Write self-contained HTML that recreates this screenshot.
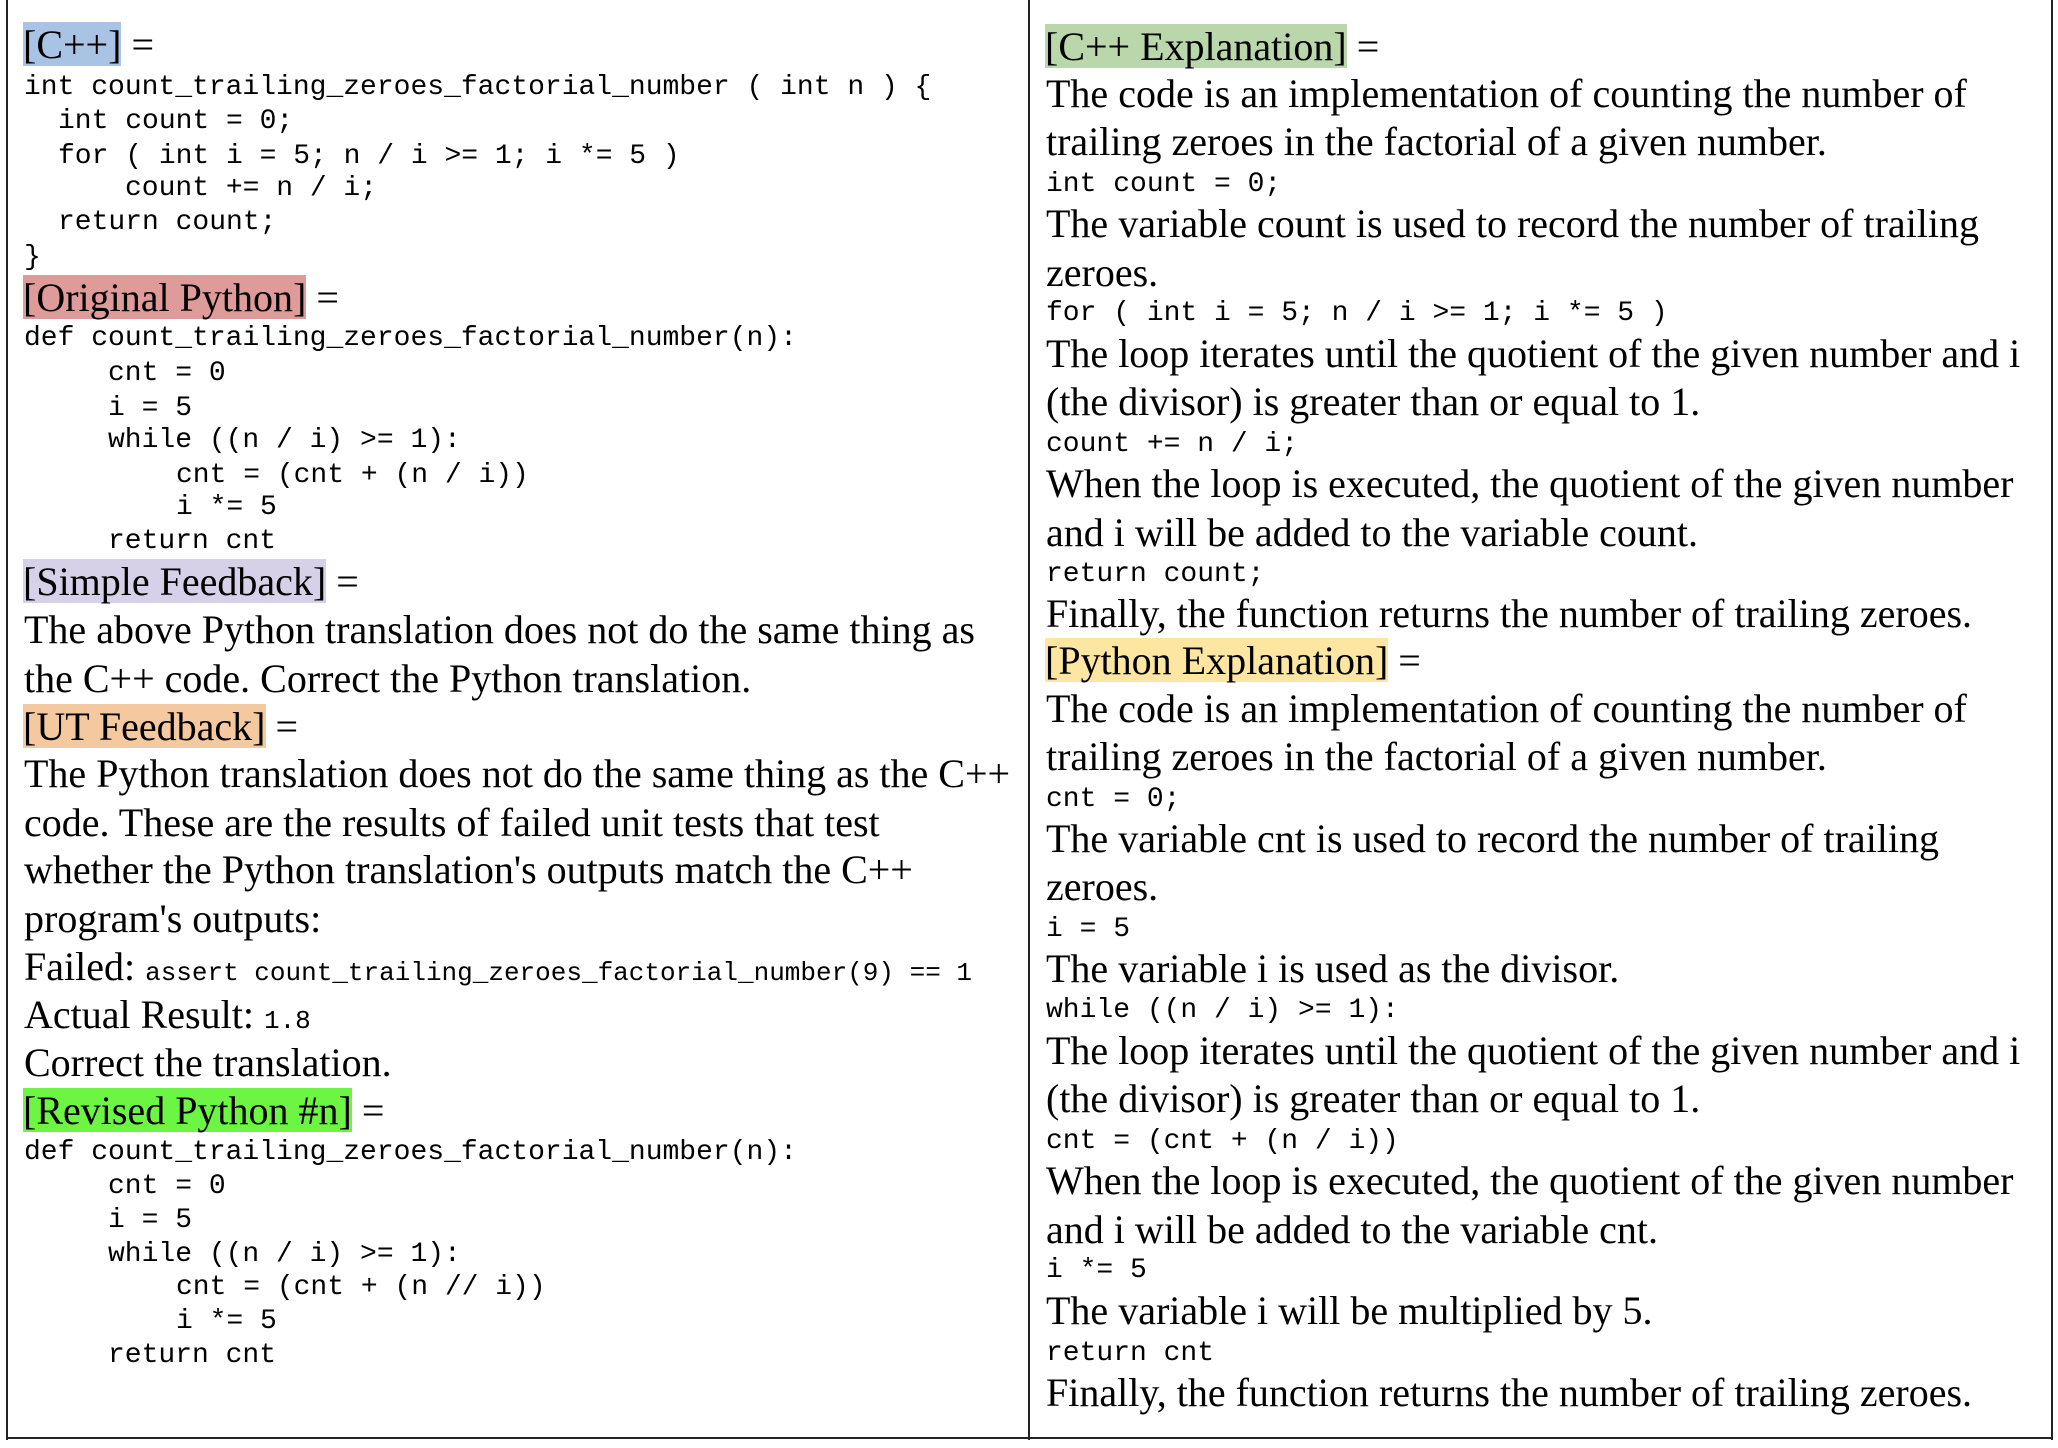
<!DOCTYPE html>
<html><head><meta charset="utf-8"><style>
body{margin:0;width:2058px;height:1448px;background:#fff;position:relative;overflow:hidden}
.l{position:absolute;white-space:pre;color:#000}
.s{font-family:"Liberation Serif",serif;font-size:40px;height:48px;line-height:48px}
.m{font-family:"Liberation Mono",monospace;font-size:28px;height:34px;line-height:34px;margin-top:3px}
.s .m{position:static;font-size:26px;margin-top:0}
.b{display:inline-block;height:44px;line-height:46px}
.v{position:absolute;background:#222}
</style></head><body>
<div class="v" style="left:6px;top:0;width:2px;height:1440px"></div>
<div class="v" style="left:1028px;top:0;width:2px;height:1440px"></div>
<div class="v" style="left:2051px;top:0;width:2px;height:1440px"></div>
<div class="v" style="left:6px;top:1437px;width:2047px;height:2px"></div>

<div class="l s" style="left:23px;top:22px;line-height:44px"><span class="b" style="background:#a8c3e4">[C++]</span> =</div>
<div class="l m" style="left:24px;top:68px">int count_trailing_zeroes_factorial_number ( int n ) {</div>
<div class="l m" style="left:58px;top:102px">int count = 0;</div>
<div class="l m" style="left:58px;top:137px">for ( int i = 5; n / i &gt;= 1; i *= 5 )</div>
<div class="l m" style="left:125px;top:169px">count += n / i;</div>
<div class="l m" style="left:58px;top:203px">return count;</div>
<div class="l m" style="left:24px;top:238px">}</div>
<div class="l s" style="left:23px;top:275px;line-height:44px"><span class="b" style="background:#df9b99">[Original Python]</span> =</div>
<div class="l m" style="left:24px;top:319px">def count_trailing_zeroes_factorial_number(n):</div>
<div class="l m" style="left:108px;top:354px">cnt = 0</div>
<div class="l m" style="left:108px;top:389px">i = 5</div>
<div class="l m" style="left:108px;top:421px">while ((n / i) &gt;= 1):</div>
<div class="l m" style="left:176px;top:456px">cnt = (cnt + (n / i))</div>
<div class="l m" style="left:176px;top:488px">i *= 5</div>
<div class="l m" style="left:108px;top:522px">return cnt</div>
<div class="l s" style="left:23px;top:559px;line-height:44px"><span class="b" style="background:#d6d0e8">[Simple Feedback]</span> =</div>
<div class="l s" style="left:24px;top:606px">The above Python translation does not do the same thing as</div>
<div class="l s" style="left:24px;top:655px">the C++ code. Correct the Python translation.</div>
<div class="l s" style="left:23px;top:704px;line-height:44px"><span class="b" style="background:#f4c9a0">[UT Feedback]</span> =</div>
<div class="l s" style="left:24px;top:750px">The Python translation does not do the same thing as the C++</div>
<div class="l s" style="left:24px;top:799px">code. These are the results of failed unit tests that test</div>
<div class="l s" style="left:24px;top:846px">whether the Python translation's outputs match the C++</div>
<div class="l s" style="left:24px;top:895px">program's outputs:</div>
<div class="l s" style="left:24px;top:943px">Failed: <span class="m">assert count_trailing_zeroes_factorial_number(9) == 1</span></div>
<div class="l s" style="left:24px;top:991px">Actual Result: <span class="m">1.8</span></div>
<div class="l s" style="left:24px;top:1039px">Correct the translation.</div>
<div class="l s" style="left:23px;top:1088px;line-height:44px"><span class="b" style="background:#6cf542">[Revised Python #n]</span> =</div>
<div class="l m" style="left:24px;top:1133px">def count_trailing_zeroes_factorial_number(n):</div>
<div class="l m" style="left:108px;top:1167px">cnt = 0</div>
<div class="l m" style="left:108px;top:1201px">i = 5</div>
<div class="l m" style="left:108px;top:1235px">while ((n / i) &gt;= 1):</div>
<div class="l m" style="left:176px;top:1268px">cnt = (cnt + (n // i))</div>
<div class="l m" style="left:176px;top:1302px">i *= 5</div>
<div class="l m" style="left:108px;top:1336px">return cnt</div>

<div class="l s" style="left:1045px;top:24px;line-height:44px"><span class="b" style="background:#b9d7aa">[C++ Explanation]</span> =</div>
<div class="l s" style="left:1046px;top:70px">The code is an implementation of counting the number of</div>
<div class="l s" style="left:1046px;top:118px">trailing zeroes in the factorial of a given number.</div>
<div class="l m" style="left:1046px;top:165px">int count = 0;</div>
<div class="l s" style="left:1046px;top:200px">The variable count is used to record the number of trailing</div>
<div class="l s" style="left:1046px;top:249px">zeroes.</div>
<div class="l m" style="left:1046px;top:294px">for ( int i = 5; n / i &gt;= 1; i *= 5 )</div>
<div class="l s" style="left:1046px;top:330px">The loop iterates until the quotient of the given number and i</div>
<div class="l s" style="left:1046px;top:378px">(the divisor) is greater than or equal to 1.</div>
<div class="l m" style="left:1046px;top:425px">count += n / i;</div>
<div class="l s" style="left:1046px;top:460px">When the loop is executed, the quotient of the given number</div>
<div class="l s" style="left:1046px;top:509px">and i will be added to the variable count.</div>
<div class="l m" style="left:1046px;top:555px">return count;</div>
<div class="l s" style="left:1046px;top:590px">Finally, the function returns the number of trailing zeroes.</div>
<div class="l s" style="left:1045px;top:638px;line-height:44px"><span class="b" style="background:#fce6a2">[Python Explanation]</span> =</div>
<div class="l s" style="left:1046px;top:685px">The code is an implementation of counting the number of</div>
<div class="l s" style="left:1046px;top:733px">trailing zeroes in the factorial of a given number.</div>
<div class="l m" style="left:1046px;top:780px">cnt = 0;</div>
<div class="l s" style="left:1046px;top:815px">The variable cnt is used to record the number of trailing</div>
<div class="l s" style="left:1046px;top:863px">zeroes.</div>
<div class="l m" style="left:1046px;top:910px">i = 5</div>
<div class="l s" style="left:1046px;top:945px">The variable i is used as the divisor.</div>
<div class="l m" style="left:1046px;top:991px">while ((n / i) &gt;= 1):</div>
<div class="l s" style="left:1046px;top:1027px">The loop iterates until the quotient of the given number and i</div>
<div class="l s" style="left:1046px;top:1075px">(the divisor) is greater than or equal to 1.</div>
<div class="l m" style="left:1046px;top:1122px">cnt = (cnt + (n / i))</div>
<div class="l s" style="left:1046px;top:1157px">When the loop is executed, the quotient of the given number</div>
<div class="l s" style="left:1046px;top:1206px">and i will be added to the variable cnt.</div>
<div class="l m" style="left:1046px;top:1251px">i *= 5</div>
<div class="l s" style="left:1046px;top:1287px">The variable i will be multiplied by 5.</div>
<div class="l m" style="left:1046px;top:1334px">return cnt</div>
<div class="l s" style="left:1046px;top:1369px">Finally, the function returns the number of trailing zeroes.</div>
</body></html>
